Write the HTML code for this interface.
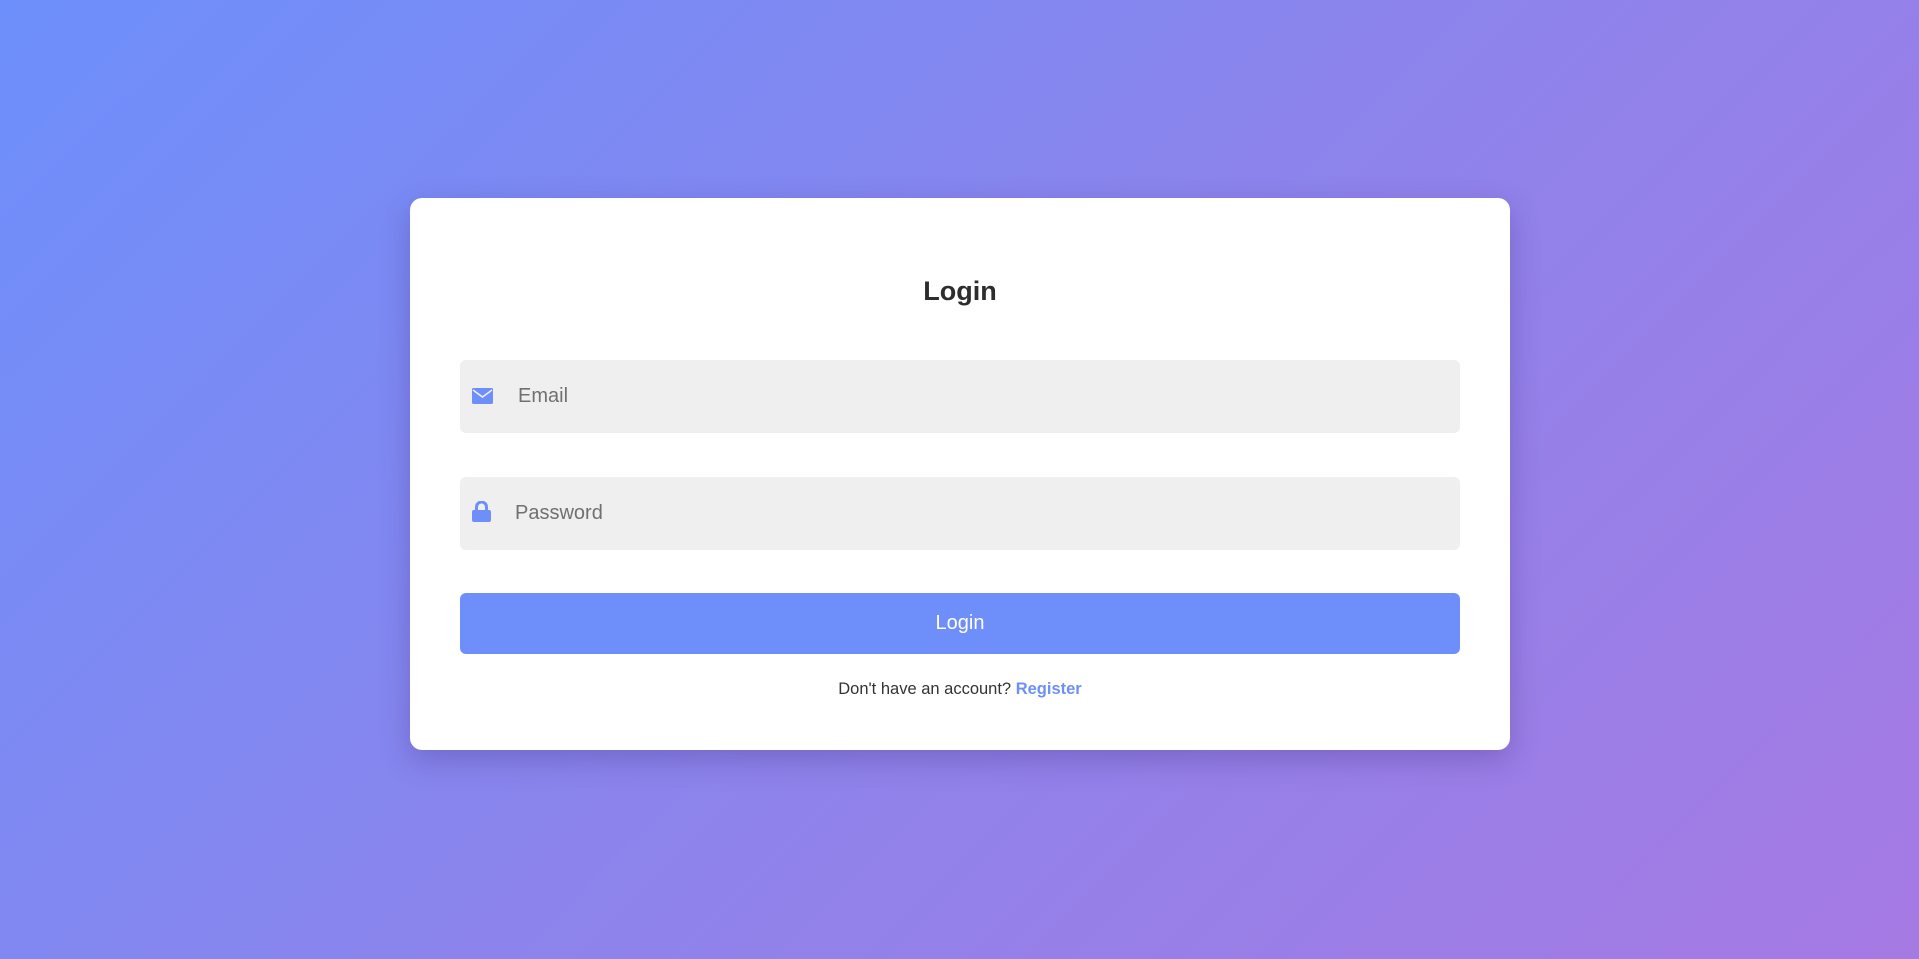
<!DOCTYPE html>
<html><head><style>
html,body{margin:0;height:100%;}
body{width:1919px;height:959px;background:linear-gradient(135deg,#6d8ffb 0%,#8c84ec 50%,#a67ae3 100%);font-family:"Liberation Sans",sans-serif;position:relative;overflow:hidden;}
.card{position:absolute;left:410px;top:198px;width:1100px;height:552px;background:#fff;border-radius:12px;box-shadow:0 10px 30px rgba(60,40,120,.3);}
h1{position:absolute;top:78px;left:0;right:0;margin:0;text-align:center;font-size:27px;font-weight:bold;color:#2d2d2d;}
.inp{position:absolute;left:50px;width:1000px;height:73px;background:#efefef;border-radius:6px;}
.inp span{position:absolute;top:25px;font-size:20px;color:#707070;}
.inp svg{position:absolute;left:12px;}
.btn{position:absolute;left:50px;top:395px;width:1000px;height:61px;background:#6e8ff9;border-radius:6px;color:#fff;font-size:20px;text-align:center;line-height:61px;}
.reg{position:absolute;top:482px;left:0;right:0;text-align:center;font-size:16.5px;color:#333;}
.reg b{color:#6e8ff9;}
</style></head><body>
<div class="card">
<h1>Login</h1>
<div class="inp" style="top:162px"><svg style="top:28px" width="21" height="16" viewBox="0 0 21 16"><rect x="0" y="0" width="21" height="16" rx="1.5" fill="#6e8ff9"/><path d="M1 2 L10.5 9 L20 2" stroke="#efefef" stroke-width="1.6" fill="none"/></svg><span style="left:58px">Email</span></div>
<div class="inp" style="top:279px"><svg style="top:24px" width="19" height="21" viewBox="0 0 19 21"><path d="M4.5 9 V6 a5 5 0 0 1 10 0 V9" stroke="#6e8ff9" stroke-width="3" fill="none"/><rect x="0" y="9" width="19" height="12" rx="2" fill="#6e8ff9"/></svg><span style="left:55px">Password</span></div>
<div class="btn">Login</div>
<div class="reg">Don't have an account? <b>Register</b></div>
</div>
</body></html>
